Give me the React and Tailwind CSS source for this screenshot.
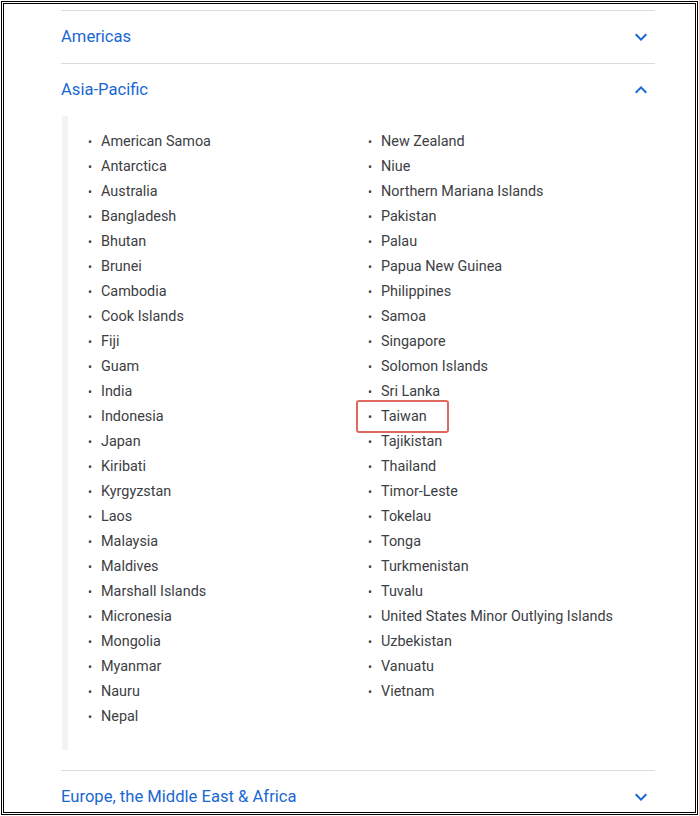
import React from "react";

const col1 = ["American Samoa","Antarctica","Australia","Bangladesh","Bhutan","Brunei","Cambodia","Cook Islands","Fiji","Guam","India","Indonesia","Japan","Kiribati","Kyrgyzstan","Laos","Malaysia","Maldives","Marshall Islands","Micronesia","Mongolia","Myanmar","Nauru","Nepal"];
const col2 = ["New Zealand","Niue","Northern Mariana Islands","Pakistan","Palau","Papua New Guinea","Philippines","Samoa","Singapore","Solomon Islands","Sri Lanka","Taiwan","Tajikistan","Thailand","Timor-Leste","Tokelau","Tonga","Turkmenistan","Tuvalu","United States Minor Outlying Islands","Uzbekistan","Vanuatu","Vietnam"];

function Chevron({ up }) {
  return (
    <svg width="24" height="24" viewBox="0 0 24 24" className={up ? "rotate-180" : ""}>
      <path d="M7.41 8.59L12 13.17l4.59-4.58L18 10l-6 6-6-6 1.41-1.41z" fill="#1967d2" />
    </svg>
  );
}

function Header({ label, up }) {
  return (
    <div className="border-t border-[#dadce0] h-[53px] flex items-center justify-between pr-[2px]">
      <span className="text-[16.6px] text-[#1967d2]">{label}</span>
      <Chevron up={up} />
    </div>
  );
}

function Item({ name }) {
  return (
    <li className="relative flex h-[25px] items-center text-[14.4px] text-[#3c4043]">
      <span className="w-[13px] shrink-0 text-[12px]">•</span>
      <span>{name}</span>
      {name === "Taiwan" && (
        <span className="absolute -left-[12px] -top-[4px] w-[93px] h-[33px] border-2 border-[#e0695f] rounded-[3px]" />
      )}
    </li>
  );
}

export default function App() {
  return (
    <div className="w-[699px] h-[816px] bg-white p-px" style={{ fontFamily: "Roboto, 'Noto Sans', sans-serif" }}>
      <div className="h-full border border-black p-px">
        <div className="h-full border border-black overflow-hidden pt-[6px] pl-[57px] pr-[40px]">
          <Header label="Americas" />
          <Header label="Asia-Pacific" up />
          <div className="flex ml-px">
            <div className="w-[6px] bg-[#f1f3f4]" />
            <div className="grid grid-cols-[280px_1fr] pl-[20px] pt-[13px] pb-[21px]">
              <ul>{col1.map((n) => <Item key={n} name={n} />)}</ul>
              <ul>{col2.map((n) => <Item key={n} name={n} />)}</ul>
            </div>
          </div>
          <div className="mt-[20px]">
            <Header label="Europe, the Middle East & Africa" />
          </div>
        </div>
      </div>
    </div>
  );
}
